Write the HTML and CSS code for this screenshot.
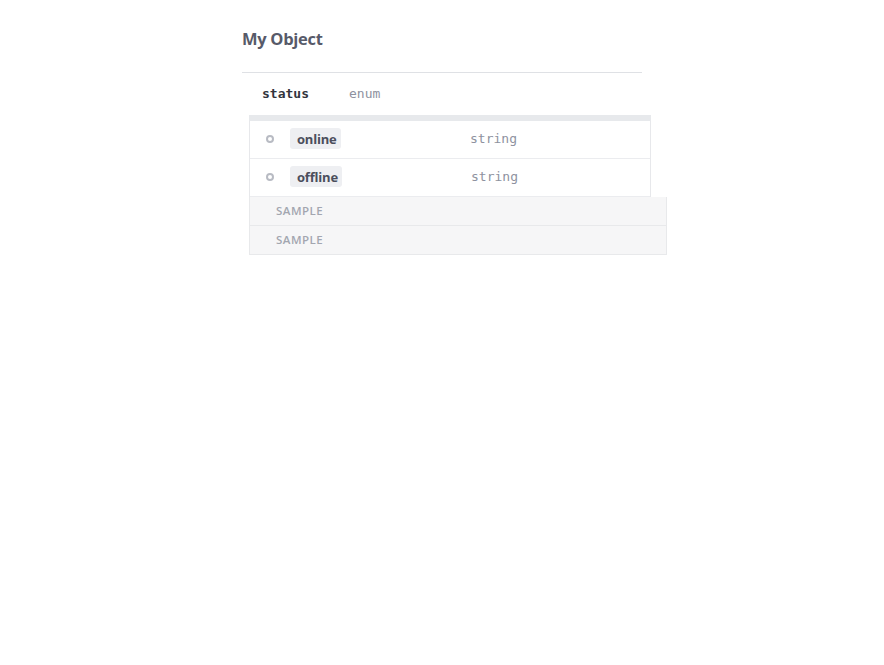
FILE: index.html
```html
<!DOCTYPE html>
<html>
<head>
<meta charset="utf-8">
<link rel="stylesheet" href="styles.css">
</head>
<body>
<div class="page">
  <h2 class="title">My Object</h2>
  <div class="prop">
    <span class="prop-name">status</span>
    <span class="prop-type">enum</span>
  </div>
  <div class="enum-panel">
    <div class="enum-bar"></div>
    <div class="enum-row">
      <span class="bullet"></span>
      <span class="tag">online</span>
      <span class="enum-type">string</span>
    </div>
    <div class="enum-row">
      <span class="bullet"></span>
      <span class="tag">offline</span>
      <span class="enum-type">string</span>
    </div>
  </div>
  <div class="samples">
    <div class="sample">SAMPLE</div>
    <div class="sample">SAMPLE</div>
  </div>
</div>
</body>
</html>
```

FILE: styles.css
```css
html, body {
  margin: 0;
  padding: 0;
  background: #ffffff;
}
body {
  font-family: "Open Sans", "Liberation Sans", sans-serif;
}
.page {
  width: 400px;
  margin: 0 auto;
  padding-top: 27px;
}
.title {
  margin: 0;
  font-size: 16.5px;
  line-height: 24px;
  font-weight: 700;
  color: #575a69;
  letter-spacing: -0.3px;
  padding-bottom: 21px;
  border-bottom: 1px solid #dfe1e5;
}
.prop {
  display: flex;
  align-items: center;
  box-sizing: border-box;
  height: 42px;
  padding-left: 20px;
  padding-bottom: 2px;
  font-family: "DejaVu Sans Mono", "Liberation Mono", monospace;
  font-size: 13px;
}
.prop-name {
  width: 87px;
  color: #33353d;
  font-weight: 600;
}
.prop-type {
  color: #8e92a0;
}
.enum-panel {
  margin-left: 7px;
  width: 400px;
  border-left: 1px solid #e7e8eb;
  border-right: 1px solid #e7e8eb;
}
.enum-bar {
  height: 6px;
  background: #e7e9ec;
  margin-left: -1px;
  margin-right: -1px;
}
.enum-row {
  display: flex;
  align-items: center;
  box-sizing: border-box;
  height: 38px;
  border-bottom: 1px solid #ebecef;
  padding-left: 16px;
  padding-bottom: 2px;
}
.bullet {
  width: 4px;
  height: 4px;
  border: 2px solid #b8bbc3;
  border-radius: 50%;
  margin-right: 16px;
}
.tag {
  width: 51px;
  height: 21px;
  box-sizing: border-box;
  padding: 0 7px;
  display: inline-flex;
  align-items: center;
  background: #eeeff2;
  border-radius: 3px;
  font-size: 13px;
  font-weight: 700;
  letter-spacing: -0.2px;
  color: #4b4e5c;
}
.enum-row:nth-child(3) .tag {
  width: 52px;
}
.enum-type {
  margin-left: 129px;
  font-family: "DejaVu Sans Mono", "Liberation Mono", monospace;
  font-size: 13px;
  color: #8e92a0;
}
.samples {
  margin-left: 7px;
  width: 418px;
}
.sample {
  box-sizing: border-box;
  height: 29px;
  display: flex;
  align-items: center;
  padding-left: 26px;
  padding-bottom: 1px;
  background: #f6f6f7;
  border: 1px solid #e8e9eb;
  border-top: none;
  font-size: 11.5px;
  letter-spacing: 0.5px;
  color: #a3a6b0;
  font-weight: 600;
}
```
